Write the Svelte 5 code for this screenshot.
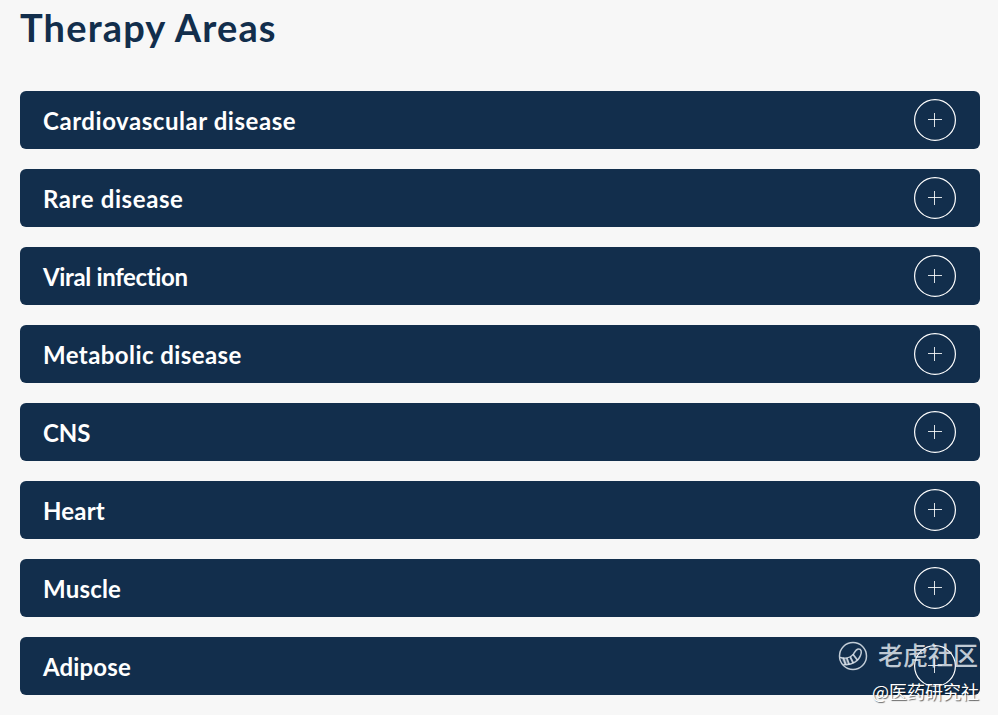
<script lang="ts">
	type Area = { name: string; tracking: number };

	const areas: Area[] = [
		{ name: 'Cardiovascular disease', tracking: 0.55 },
		{ name: 'Rare disease', tracking: 0.6 },
		{ name: 'Viral infection', tracking: -0.35 },
		{ name: 'Metabolic disease', tracking: 0.42 },
		{ name: 'CNS', tracking: -0.1 },
		{ name: 'Heart', tracking: 0.2 },
		{ name: 'Muscle', tracking: 0.2 },
		{ name: 'Adipose', tracking: 0.15 }
	];

	let open = $state<string | null>(null);

	function toggle(name: string) {
		open = open === name ? null : name;
	}
</script>

<main class="page">
	<h1>Therapy Areas</h1>

	<div class="list">
		{#each areas as area (area.name)}
			<button class="row" aria-expanded={open === area.name} onclick={() => toggle(area.name)}>
				<span class="name" style="letter-spacing: {area.tracking}px">{area.name}</span>
				<svg class="icon" width="42" height="42" viewBox="0 0 42 42" fill="none" stroke="currentColor">
					<circle cx="21" cy="21" r="20.4" stroke-width="1.2" />
					<path d="M14 20.5H28" stroke-opacity="0.85" />
					{#if open !== area.name}
						<path d="M20.5 14V28" stroke-opacity="0.85" />
					{/if}
				</svg>
			</button>
		{/each}
	</div>

	<div class="watermark">
		<div class="brand">
			<svg width="30" height="30" viewBox="0 0 30 30" fill="none" stroke="currentColor" stroke-width="1.5" stroke-linecap="round" stroke-linejoin="round">
				<circle cx="15" cy="15" r="13.5" />
				<path d="M2.5 16.5C6 17.500 12 17.500 15.500 13C17 10.500 18 8 20.500 8C23.500 8 24 11 22.500 14.500C20.500 20 14 24.500 6 23.500" />
				<path d="M3 17L9 17.500L10.500 23.500L6 23Z" fill="currentColor" fill-opacity="0.35" stroke="none" />
				<path d="M5.500 17.500L7.500 23M9 17.500L11 23M12.500 16.500L15 21.500M15.500 14L19 18.500" stroke-width="1.8" />
			</svg>
			<span>老虎社区</span>
		</div>
		<div class="author">@医药研究社</div>
	</div>
</main>

<style>
	:global(body) {
		background: #f7f7f7;
	}

	.page {
		position: relative;
		box-sizing: border-box;
		height: 715px;
		padding: 0 18px 0 20px;
		overflow: hidden;
		font-family: Lato, sans-serif;
	}

	h1 {
		margin: 0 0 37px;
		font-size: 38px;
		line-height: 54px;
		font-weight: 700;
		letter-spacing: 1.15px;
		color: #122e4c;
	}

	.list {
		display: flex;
		flex-direction: column;
		gap: 20px;
	}

	.row {
		display: flex;
		align-items: center;
		justify-content: space-between;
		height: 58px;
		padding: 0 24px 0 23px;
		border: 0;
		border-radius: 6px;
		background: #122e4c;
		color: #fff;
		font-family: inherit;
		cursor: pointer;
	}

	.name {
		padding-top: 2px;
		font-size: 24px;
		line-height: 30px;
		font-weight: 700;
		font-variant-ligatures: none;
		white-space: nowrap;
	}

	.watermark {
		position: absolute;
		right: 19px;
		bottom: 9px;
		display: flex;
		flex-direction: column;
		align-items: flex-end;
		font-family: "Noto Sans CJK SC", sans-serif;
		pointer-events: none;
	}

	.brand {
		display: flex;
		align-items: center;
		gap: 10px;
		height: 36px;
		margin: 0 1px 2px 0;
		font-size: 25px;
		font-weight: 500;
		color: rgba(225, 231, 238, 0.85);
	}

	.brand span {
		margin-top: -5px;
	}

	.author {
		height: 30px;
		font-size: 18px;
		line-height: 30px;
		font-weight: 400;
		color: #fff;
		text-shadow: 1px 1px 1px rgba(0, 0, 0, 0.6);
	}
</style>
